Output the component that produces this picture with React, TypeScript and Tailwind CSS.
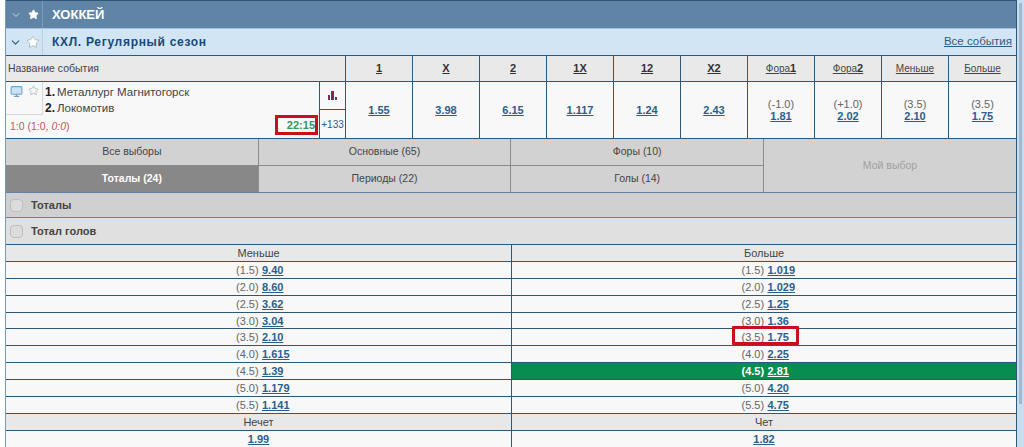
import { ChevronDown, Star, Monitor } from 'lucide-react';

const headCols = ['1', 'X', '2', '1X', '12', 'X2'];
const mainOdds = ['1.55', '3.98', '6.15', '1.117', '1.24', '2.43'];

const sideCols = [
  { label: 'Фора', bold: '1', base: '(-1.0)', odd: '1.81' },
  { label: 'Фора', bold: '2', base: '(+1.0)', odd: '2.02' },
  { label: 'Меньше', bold: '', base: '(3.5)', odd: '2.10' },
  { label: 'Больше', bold: '', base: '(3.5)', odd: '1.75' },
];

const totals = [
  { base: '(1.5)', under: '9.40', over: '1.019' },
  { base: '(2.0)', under: '8.60', over: '1.029' },
  { base: '(2.5)', under: '3.62', over: '1.25' },
  { base: '(3.0)', under: '3.04', over: '1.36' },
  { base: '(3.5)', under: '2.10', over: '1.75', marked: true },
  { base: '(4.0)', under: '1.615', over: '2.25' },
  { base: '(4.5)', under: '1.39', over: '2.81', active: true },
  { base: '(5.0)', under: '1.179', over: '4.20' },
  { base: '(5.5)', under: '1.141', over: '4.75' },
];

function Odd({ value }: { value: string }) {
  return <a className="font-bold text-[#2a5f8c] underline">{value}</a>;
}

function Checkbox() {
  return <span className="w-[13px] h-[13px] rounded-sm border border-[#bdbdbd] bg-[#dcdcdc]" />;
}

function TotalCell({ base, odd }: { base: string; odd: string }) {
  return (
    <span className="inline-block w-[45px] text-left whitespace-nowrap">
      <span className="inline-block w-[26px]">{base}</span>
      <Odd value={odd} />
    </span>
  );
}

export default function App() {
  return (
    <div className="w-[1024px] h-[447px] overflow-hidden bg-white flex font-['Liberation_Sans',Arial,sans-serif] text-[11px] text-[#444]">
      <div className="w-[1012px] ml-[5px] h-[447px] border-x border-l-[#7d9ab3] border-r-[#2f5878] flex flex-col shrink-0">
        {/* sport header */}
        <div className="h-[28px] shrink-0 flex bg-[#5f84a5] border-t border-[#2f5878]">
          <div className="w-[37px] flex items-center justify-center gap-[6px] border-r border-[#7f9db8] text-white">
            <ChevronDown size={12} className="text-[#c6d6e4]" />
            <Star size={11} fill="white" stroke="white" />
          </div>
          <div className="pl-[9px] flex items-center text-white font-bold text-[13px]">ХОККЕЙ</div>
        </div>

        {/* league header */}
        <div className="h-[27px] shrink-0 flex bg-[#d2e5f5] border-t border-[#a9c3da]">
          <div className="w-[37px] flex items-center justify-center gap-[4px] border-r border-[#b9d0e4]">
            <ChevronDown size={13} className="text-[#2c5a80]" />
            <Star size={14} strokeWidth={1} className="text-[#8a9aa6]" fill="white" />
          </div>
          <div className="pl-[9px] flex items-center text-[#17497a] font-bold text-[12px] tracking-[0.7px]">КХЛ. Регулярный сезон</div>
          <a className="ml-auto mr-[4px] self-center text-[#2a5f8c] underline text-[11.5px]">Все события</a>
        </div>

        {/* table head */}
        <div className="h-[27px] shrink-0 flex bg-[#e9e9e9] border-y border-[#2f5878]">
          <div className="w-[339px] pl-[2px] pt-[1px] flex items-center text-[#444] text-[10.5px] shrink-0">Название события</div>
          {headCols.map((c) => (
            <div key={c} className="w-[67px] border-l border-[#2f5878] flex items-center justify-center font-bold underline text-[#333]">{c}</div>
          ))}
          {sideCols.map((c) => (
            <div key={c.label + c.bold} className="w-[67px] last:grow border-l border-[#2f5878] flex items-center justify-center underline text-[10px] text-[#444]">
              {c.label}
              {c.bold && <b className="text-[11px] text-[#333]">{c.bold}</b>}
            </div>
          ))}
        </div>

        {/* event row */}
        <div className="h-[56px] shrink-0 flex bg-[#f8f8f8]">
          <div className="w-[313px] shrink-0 flex flex-col">
            <div className="flex h-[33px]">
              <div className="w-[37px] flex items-start justify-center gap-[5px] pt-[3px] border-r border-b border-[#d8d8d8] h-[33px]">
                <Monitor size={13} className="text-[#6ea3c9]" fill="#cfe2f0" />
                <Star size={11} strokeWidth={1.2} className="text-[#8a9aa6]" />
              </div>
              <div className="pl-[2px] text-[11.5px] leading-[16px] pt-[2px] text-[#444]">
                <div><b className="text-[#222] text-[12px] mr-[2px]">1.</b>Металлург Магнитогорск</div>
                <div><b className="text-[#222] text-[12px] mr-[2px]">2.</b>Локомотив</div>
              </div>
            </div>
            <div className="flex-1 flex items-center justify-between pl-[4px] pr-[4px] text-[10.5px] text-[#c8505f]">
              <span>1:0 (1:0, <i>0:0</i>)</span>
              <span className="font-bold text-[11px] text-[#2f9a62] outline-[3px] outline-[#c8101a] w-[37px] h-[14px] leading-[14px] text-right mb-[3px] whitespace-nowrap">22:15</span>
            </div>
          </div>
          <div className="w-[26px] shrink-0 flex flex-col border-l border-[#2f5878]">
            <div className="h-[28px] flex items-end justify-center gap-[1px] pb-[9px] border-b border-[#2f5878]">
              <span className="w-[2px] h-[5px] bg-[#8a2456]" />
              <span className="w-[3px] h-[9px] bg-[#8a2456]" />
              <span className="w-[2px] h-[3px] bg-[#8a2456]" />
            </div>
            <div className="flex-1 flex items-center justify-center text-[10px] text-[#2a5f8c]">+133</div>
          </div>
          {mainOdds.map((o) => (
            <div key={o} className="w-[67px] border-l border-[#2f5878] flex items-center justify-center"><Odd value={o} /></div>
          ))}
          {sideCols.map((c) => (
            <div key={c.label + c.bold} className="w-[67px] last:grow border-l border-[#2f5878] flex flex-col items-center justify-center leading-[12px]">
              <span className="text-[#666]">{c.base}</span>
              <Odd value={c.odd} />
            </div>
          ))}
        </div>

        {/* market tabs */}
        <div className="h-[54px] shrink-0 flex bg-[#d2d2d2] border-t border-[#2f5878] text-[10.5px]">
          <div className="w-[758px] grid grid-cols-3 grid-rows-2 shrink-0">
            <div className="flex items-center justify-center border-r border-b border-[#8c8c8c]">Все выборы</div>
            <div className="flex items-center justify-center border-r border-b border-[#8c8c8c]">Основные (65)</div>
            <div className="flex items-center justify-center border-r border-b border-[#8c8c8c]">Форы (10)</div>
            <div className="flex items-center justify-center border-r border-[#8c8c8c] bg-[#888] text-white font-bold">Тоталы (24)</div>
            <div className="flex items-center justify-center border-r border-[#8c8c8c]">Периоды (22)</div>
            <div className="flex items-center justify-center border-r border-[#8c8c8c]">Голы (14)</div>
          </div>
          <div className="flex-1 flex items-center justify-center text-[#a0a0a0]">Мой выбор</div>
        </div>

        {/* market groups */}
        <div className="h-[26px] shrink-0 flex items-center gap-[8px] pl-[4px] bg-[#d0d0d0] border-t border-b border-[#5f84a5] text-[11px] font-bold text-[#444]">
          <Checkbox />
          Тоталы
        </div>
        <div className="h-[27px] shrink-0 flex items-center gap-[8px] pl-[4px] bg-[#e0e0e0] border-b border-[#2f5878] text-[11px] font-bold text-[#444]">
          <Checkbox />
          Тотал голов
        </div>

        {/* totals table */}
        <div className="h-[17px] shrink-0 grid grid-cols-[506px_1fr] bg-[#e8e8e8] border-b border-[#2f5878] leading-[17px] text-center">
          <div className="border-r border-[#2f5878]">Меньше</div>
          <div>Больше</div>
        </div>
        {totals.map((t) => (
          <div key={t.base} className="h-[16.85px] shrink-0 grid grid-cols-[506px_1fr] bg-[#f8f8f8] border-b border-[#2f5878] leading-[16px] text-center text-[#666]">
            <div className="border-r border-[#2f5878]"><TotalCell base={t.base} odd={t.under} /></div>
            {t.active ? (
              <div className="bg-[#068d4f] text-white font-bold">
                <span className="inline-block w-[45px] text-left whitespace-nowrap">
                  <span className="inline-block w-[26px]">{t.base}</span>
                  <a className="underline">{t.over}</a>
                </span>
              </div>
            ) : t.marked ? (
              <div>
                <span className="relative inline-block">
                  <TotalCell base={t.base} odd={t.over} />
                  <span className="absolute -left-[10px] -right-[12px] -top-[3px] bottom-0 border-[3px] border-[#c8101a] rounded-[1px]" />
                </span>
              </div>
            ) : (
              <div><TotalCell base={t.base} odd={t.over} /></div>
            )}
          </div>
        ))}
        <div className="h-[17px] shrink-0 grid grid-cols-[506px_1fr] bg-[#e8e8e8] border-b border-[#2f5878] leading-[16px] text-center">
          <div className="border-r border-[#2f5878]">Нечет</div>
          <div>Чет</div>
        </div>
        <div className="h-[17px] shrink-0 grid grid-cols-[506px_1fr] bg-[#f8f8f8] leading-[16px] text-center">
          <div className="border-r border-[#2f5878]"><Odd value="1.99" /></div>
          <div><Odd value="1.82" /></div>
        </div>
      </div>

      {/* page scrollbar */}
      <div className="w-[7px] h-[447px] bg-[#c9ddf0] pl-[2px] pt-[3px]">
        <div className="w-[3px] h-[401px] bg-[#a3b8ce]" />
      </div>
    </div>
  );
}
